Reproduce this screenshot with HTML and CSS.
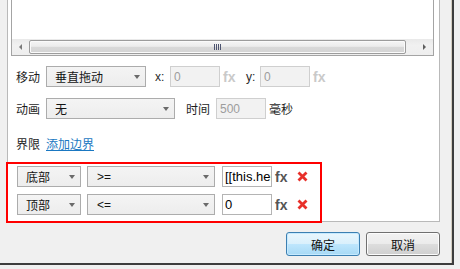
FILE: index.html
```html
<!DOCTYPE html>
<html lang="zh-CN">
<head>
<meta charset="utf-8">
<title>边界设置</title>
<link rel="stylesheet" href="styles.css">
</head>
<body>
<div class="frame">
  <div class="panel">
    <div class="editor">
      <div class="editor-body"></div>
      <div class="hscroll">
        <span class="sb-btn"><span class="tri tri-left"></span></span>
        <div class="thumb"><span class="grip"><i></i><i></i><i></i><i></i></span></div>
        <span class="sb-track"></span>
        <span class="sb-btn"><span class="tri tri-right"></span></span>
      </div>
    </div>

    <div class="form">
      <div class="row row-first">
        <span class="label">移动</span>
        <div class="select w100"><span class="val">垂直拖动</span><span class="caret"></span></div>
        <span class="coord coord-x">x:</span>
        <input class="field field-off" value="0" readonly>
        <span class="fx fx-off">fx</span>
        <span class="coord coord-y">y:</span>
        <input class="field field-off" value="0" readonly>
        <span class="fx fx-off">fx</span>
      </div>
      <div class="row">
        <span class="label">动画</span>
        <div class="select w129"><span class="val">无</span><span class="caret"></span></div>
        <span class="text-time">时间</span>
        <input class="field field-off field-time" value="500" readonly>
        <span class="unit">毫秒</span>
      </div>
      <div class="row row-bounds">
        <span class="label">界限</span>
        <a class="link" href="#">添加边界</a>
      </div>
    </div>

    <div class="bounds">
      <div class="cond">
        <div class="select w64"><span class="val">底部</span><span class="caret"></span></div>
        <div class="select w128 op"><span class="val">&gt;=</span><span class="caret"></span></div>
        <input class="field field-on" value="[[this.height]]">
        <span class="fx fx-on">fx</span>
        <svg class="del" width="11" height="11" viewBox="0 0 11 11"><path d="M1.5 1.5 L9.5 9.5 M9.5 1.5 L1.5 9.5" stroke="#e8302a" stroke-width="2.8" fill="none"/></svg>
      </div>
      <div class="cond">
        <div class="select w64"><span class="val">顶部</span><span class="caret"></span></div>
        <div class="select w128 op"><span class="val">&lt;=</span><span class="caret"></span></div>
        <input class="field field-on" value="0">
        <span class="fx fx-on">fx</span>
        <svg class="del" width="11" height="11" viewBox="0 0 11 11"><path d="M1.5 1.5 L9.5 9.5 M9.5 1.5 L1.5 9.5" stroke="#e8302a" stroke-width="2.8" fill="none"/></svg>
      </div>
    </div>
  </div>

  <div class="actions">
    <button class="btn btn-default" type="button">确定</button>
    <button class="btn" type="button">取消</button>
  </div>
</div>
</body>
</html>
```

FILE: styles.css
```css
* { box-sizing: border-box; }
html, body { margin: 0; padding: 0; }
body {
  width: 460px;
  height: 269px;
  overflow: hidden;
  background: #f0f0f0;
  font-family: "Liberation Sans", "Noto Sans CJK SC", sans-serif;
  font-size: 12px;
  color: #1e1e1e;
}

.frame {
  width: 454px;
  height: 265px;
  padding-left: 7px;
  background: #f0f0f0;
  border-right: 2px solid #3d3d3d;
  border-bottom: 2px solid #3d3d3d;
  box-shadow: inset -1px 0 0 #d4cdc0;
}

.panel {
  width: 433px;
  height: 222px;
  background: #fff;
  border: 1px solid #b9b9b9;
  border-top: none;
  padding: 0 5px 0 3px;
}

/* editor with horizontal scrollbar */
.editor {
  height: 56px;
  border: 1px solid #a4a4a4;
  border-top: none;
  display: flex;
  flex-direction: column;
}
.editor-body { flex: 1; background: #fff; }
.hscroll {
  height: 16px;
  display: flex;
  align-items: center;
  background: linear-gradient(#e9e9e9, #f1f1f1 40%, #eeeeee);
}
.sb-btn {
  width: 17px;
  height: 16px;
  display: flex;
  align-items: center;
  justify-content: center;
}
.sb-track { flex: 1; }
.tri { width: 0; height: 0; border-top: 3px solid transparent; border-bottom: 3px solid transparent; }
.tri-left { border-right: 3px solid #7a7a7a; }
.tri-right { border-left: 3px solid #5e5e5e; }
.thumb {
  width: 377px;
  height: 14px;
  border: 1px solid #9c9c9c;
  border-radius: 2px;
  background: linear-gradient(#f5f5f5 0%, #ececec 45%, #d9d9d9 50%, #d4d4d4 100%);
  box-shadow: inset 0 0 0 1px #fafafa;
  display: flex;
  align-items: center;
  justify-content: center;
}
.grip { display: flex; gap: 1px; height: 6px; }
.grip i { display: block; width: 1px; height: 6px; background: #4d5470; }

/* form */
.form { padding-left: 5px; }
.row {
  display: flex;
  align-items: center;
  height: 21px;
  margin-top: 11px;
}
.row-first { margin-top: 10px; }
.row-bounds { height: 16px; margin-top: 17px; }
.label {
  width: 24px;
  margin-right: 6px;
  font-family: "Noto Sans CJK SC", sans-serif;
  font-size: 12px;
  line-height: 16px;
  color: #1e1e1e;
  white-space: nowrap;
}

.select {
  position: relative;
  height: 21px;
  border: 1px solid #acacac;
  background: linear-gradient(#f4f4f4, #ededed);
  display: flex;
  align-items: center;
  padding-left: 8px;
}
.select .val {
  font-family: "Noto Sans CJK SC", sans-serif;
  font-size: 12px;
  line-height: 16px;
  color: #141414;
}
.select.op .val { font-family: "Liberation Sans", sans-serif; padding-left: 1px; }
.caret {
  position: absolute;
  right: 5px;
  top: 8px;
  width: 0;
  height: 0;
  border-left: 3.5px solid transparent;
  border-right: 3.5px solid transparent;
  border-top: 4px solid #6a6a6a;
}
.w100 { width: 100px; }
.w129 { width: 129px; }
.w64 { width: 64px; }
.w128 { width: 128px; }

.coord {
  font-family: "Liberation Sans", sans-serif;
  font-size: 12px;
  color: #2a2a2a;
}
.coord-x { width: 15px; margin-left: 9px; }
.coord-y { width: 14px; margin-left: 11px; }

.field {
  width: 50px;
  height: 21px;
  margin: 0;
  padding: 0 0 0 3px;
  font-family: "Liberation Sans", sans-serif;
  font-size: 12px;
  outline: none;
}
.field-off {
  border: 1px solid #cfcfcf;
  background: #f2f2f2;
  color: #9d9d9d;
}
.field-time { margin-left: 6px; }
.field-on {
  border: 1px solid #b4b4b4;
  background: #fff;
  color: #000;
  margin-left: 7px;
  padding-left: 2px;
  font-size: 13px;
}

.fx {
  font-family: "Liberation Sans", sans-serif;
  font-weight: bold;
  font-size: 14px;
  margin-left: 3px;
  width: 12px;
}
.fx-off { color: #c9c9c9; }
.fx-on { color: #555; width: 13px; }

.text-time, .unit {
  font-family: "Noto Sans CJK SC", sans-serif;
  font-size: 12px;
  line-height: 16px;
  color: #1e1e1e;
}
.text-time { margin-left: 11px; }
.unit { margin-left: 3px; }

.link {
  font-family: "Noto Sans CJK SC", sans-serif;
  font-size: 12px;
  line-height: 16px;
  color: #1a78c2;
  text-decoration: underline;
}

/* bounds (highlighted) */
.bounds {
  width: 316px;
  height: 61px;
  margin: 10px 0 0 -5px;
  border: 2px solid #ff0000;
  padding: 2px 0 0 9px;
  display: flex;
  flex-direction: column;
  gap: 7px;
}
.cond {
  display: flex;
  align-items: center;
  height: 21px;
}
.cond .op { margin-left: 6px; }
.del { margin-left: 9px; display: block; }

/* buttons */
.actions {
  width: 433px;
  margin-top: 10px;
  display: flex;
  justify-content: flex-end;
  gap: 6px;
}
.btn {
  width: 74px;
  height: 24px;
  margin: 0;
  padding: 0;
  border: 1px solid #707070;
  border-radius: 3px;
  background: linear-gradient(#f2f2f2 0%, #ebebeb 50%, #dddddd 51%, #cfcfcf 100%);
  box-shadow: inset 0 0 0 1px #fcfcfc;
  font-family: "Noto Sans CJK SC", sans-serif;
  font-size: 12px;
  color: #111;
}
.btn-default {
  border-color: #3c7fb1;
  background: linear-gradient(#eaf6fd 0%, #d9f0fc 50%, #bee6fd 51%, #a7d9f5 100%);
  box-shadow: inset 0 0 0 1px #c6eaff;
}
```
